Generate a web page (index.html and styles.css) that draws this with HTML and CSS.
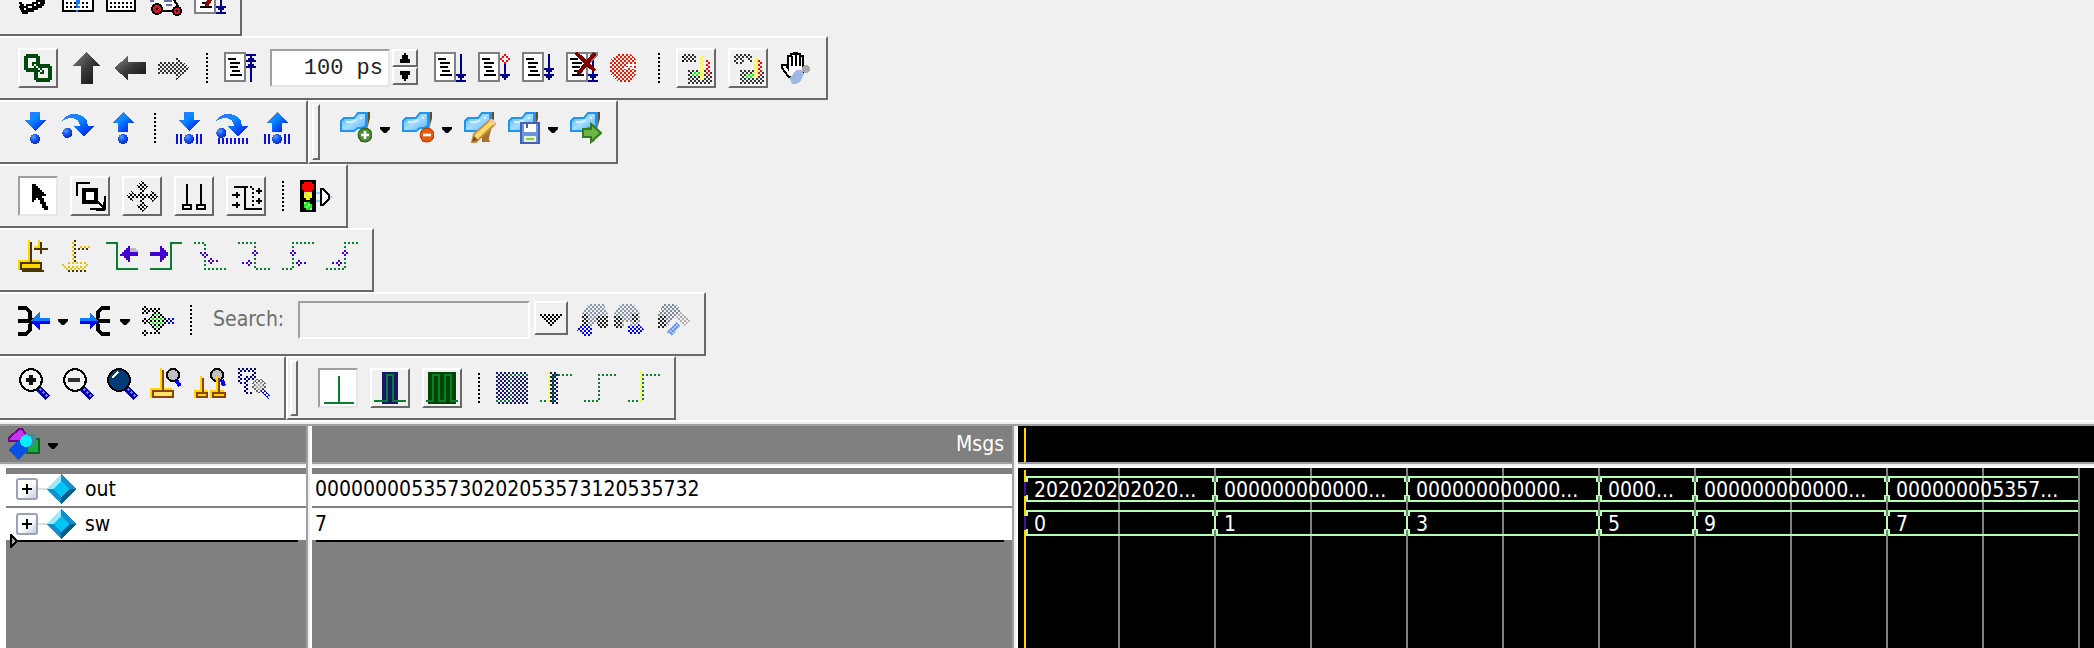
FILE: index.html
```html
<!DOCTYPE html>
<html lang="en">
<head>
<meta charset="utf-8">
<title>Wave</title>
<link rel="stylesheet" href="styles.css">
</head>
<body>
<svg class="defs" aria-hidden="true">
  <defs>
    <pattern id="chk" width="2" height="2" patternUnits="userSpaceOnUse"><path d="M0 0h1v1H0zM1 1h1v1H1z" fill="#fff"/></pattern>
    <pattern id="chk2" width="2" height="2" patternUnits="userSpaceOnUse"><path d="M1 0h1v1H1zM0 1h1v1H0z" fill="#fff"/></pattern>
    <mask id="dither" maskUnits="userSpaceOnUse" x="0" y="0" width="16" height="16"><rect width="16" height="16" fill="url(#chk)"/></mask>
    <mask id="dither2" maskUnits="userSpaceOnUse" x="0" y="0" width="16" height="16"><rect width="16" height="16" fill="url(#chk2)"/></mask>
    <linearGradient id="blue" x1="0" y1="0" x2="1" y2="1"><stop offset="0" stop-color="#3a6cff"/><stop offset=".4" stop-color="#0a8cff"/><stop offset="1" stop-color="#0008f0"/></linearGradient>
    <linearGradient id="dark" x1="0" y1="0" x2="1" y2="1"><stop offset="0" stop-color="#8a8a8a"/><stop offset=".5" stop-color="#3a3a3a"/><stop offset="1" stop-color="#111"/></linearGradient>
    <linearGradient id="sky" x1="0" y1="0" x2="1" y2="1"><stop offset="0" stop-color="#3fb0fa"/><stop offset=".5" stop-color="#a5dcff"/><stop offset="1" stop-color="#48b2fa"/></linearGradient>
    <radialGradient id="ball" cx=".35" cy=".3" r=".8"><stop offset="0" stop-color="#4fa0ff"/><stop offset=".5" stop-color="#1650f0"/><stop offset="1" stop-color="#0a1ec0"/></radialGradient>
  </defs>
  <symbol id="doc" viewBox="0 0 16 16"><path d="M.5.5h10v14H.5z" fill="#fff" stroke="#808080"/><path d="M2 3.500h4M3 5.500h5M3 7.500h4M4 9.500h4M3 11.500h6" stroke="#000"/></symbol>
  <symbol id="flag" viewBox="0 0 16 16"><path d="M13 0h2v3l-1 4-2 8h-2l2-7z" fill="#a8752f"/><path d="M14 0h1v3l-1 3z" fill="#6b4a1d"/><path d="M.5 4.500L2 3h5l2-2.500h4V7l-2 1H9L7 9.500H.5z" fill="url(#sky)" stroke="#1d94f2"/><path d="M3 5h3l2-1M10 3h1" stroke="#d5f0ff" fill="none"/></symbol>
  <symbol id="down" viewBox="0 0 16 16"><path d="M6 0h5v4h3L8.500 9.500 3 4h3z" fill="url(#blue)"/><circle cx="8.500" cy="13.500" r="2.500" fill="url(#ball)"/></symbol>
  <symbol id="over" viewBox="0 0 16 16"><path d="M0 4.500C1 2 4 1 6 1c4 0 7 2 7 6h3l-5 5.500L6 7h3C9 4.500 7 3 4.500 3 2.500 3 1 3.500 0 4.500z" fill="url(#blue)"/><circle cx="2.700" cy="10.500" r="2.500" fill="url(#ball)"/></symbol>
  <symbol id="up" viewBox="0 0 16 16"><path d="M8.500 0L14 5.500h-3V10H6V5.500H3z" fill="url(#blue)"/><circle cx="8.500" cy="13.500" r="2.500" fill="url(#ball)"/></symbol>
  <symbol id="lens" viewBox="0 0 16 16"><path d="M10 10l5 5" stroke="#0000b0" stroke-width="3"/><path d="M11 10.500l4 4" stroke="#8080ff" stroke-dasharray="1 1"/><circle cx="6.500" cy="6" r="5.400" fill="#f4f4f4" stroke="#000"/></symbol>
</svg>

<header class="toolbars">
  <div class="row row-top">
    <div class="bar plain" role="toolbar" aria-label="Layout">
      <button class="tool" aria-label="Layers"><svg viewBox="0 0 16 16"><path d="M1 8l3 7 5-1 6-6V5H5z" fill="#fff"/><path d="M1 10h1v1h1v1h2v-1h3v-1h2V9h2V8h2M1 12h1v1h1v1h2v-1h3v-1h2v-1h2v-1h1V9h1M2 14h1v1h2v-1h3v-1h2v-1h2v-1h1v-1h1" transform="translate(-.5 -.5)" fill="none" stroke="#000" stroke-width=".8"/></svg></button>
      <button class="tool" aria-label="Columns"><svg viewBox="0 0 16 16"><path d="M.5 2.500h15v11H.5z" fill="#fff" stroke="#000"/><path d="M2 9.500h12M2 11.500h12" stroke="#000" stroke-dasharray="1 1"/><path d="M7 2h1v9h1v1H7zM8 8h1v2H8zM7 13h1v1H7z" fill="#0a7cff"/></svg></button>
      <button class="tool" aria-label="Grid"><svg viewBox="0 0 16 16"><path d="M.5 2.500h14v11H.5z" fill="#fff" stroke="#000"/><path d="M2 9.500h12M2 11.500h12" stroke="#000" stroke-dasharray="1 1"/></svg></button>
      <button class="tool" aria-label="Compile"><svg viewBox="0 0 16 16"><path d="M2 4h10v7H2z" fill="#fff"/><path d="M0 8.500h2M7 8.500h4M8 10.500h3" stroke="#6a6aa8"/><path d="M6 13.500h6M12 8l2 3" stroke="#000"/><circle cx="3.500" cy="12.500" r="2.500" fill="#d4142c" stroke="#000"/><circle cx="13.500" cy="13.500" r="2" fill="#d4142c" stroke="#000"/><path d="M3 12.500h1M13 13.500h1" stroke="#000"/></svg></button>
      <button class="tool" aria-label="Simulate"><svg viewBox="0 0 16 16"><use href="#doc"/><path d="M8.500 7L6 11" stroke="#900" stroke-width="2"/><path d="M13.500 4v10M11 14.500h5M11 11.500h5M12 12.500h3" stroke="#00008b"/></svg></button>
    </div>
  </div>

  <div class="row">
    <div class="bar" role="toolbar" aria-label="Simulate">
      <button class="tool raised" aria-label="Link"><svg viewBox="0 0 16 16"><path d="M2 1h6v1h1v7H8v1H2V9H1V2h1z" fill="#004a10"/><path d="M3 3h4v5H3z" fill="#f0f0f0"/><path d="M7 6h7v1h1v7h-1v1H7v-1H6V7h1z" fill="#004a10"/><path d="M8 8h5v5H8z" fill="#f0f0f0"/><path d="M5 5h2v1h1v1h2v2h1v2H9v-1H8V9H6V7H5z" fill="#004a10"/><path d="M6 6h1v1H6zM7 7h1v1H7zM8 8h1v1H8zM9 9h1v1H9z" fill="#f0f0f0"/></svg></button>
      <button class="tool" aria-label="Up"><svg viewBox="0 0 16 16"><path d="M8 0l7 7h-3.500v9h-6V7H1z" fill="url(#dark)"/></svg></button>
      <button class="tool" aria-label="Back"><svg viewBox="0 0 16 16"><path d="M0 8l7-6v3h9v6H7v3z" fill="url(#dark)"/></svg></button>
      <button class="tool" aria-label="Forward" disabled><svg viewBox="0 0 16 16"><path d="M16 8L9 2v3H0v6h9v3z" fill="#333" mask="url(#dither)"/></svg></button>
      <span class="sep"></span>
      <button class="tool" aria-label="Restart"><svg viewBox="0 0 16 16"><use href="#doc"/><path d="M11 1.500h5M13.500 1v14M12 3.500h3M11 4.500h5M12 6.500h3M11 7.500h5" stroke="#00008b"/></svg></button>
      <span class="spin">
        <input class="entry" type="text" value="100 ps" aria-label="Run length">
        <span class="steps">
          <button class="step" aria-label="Increase"><svg viewBox="0 0 5 5"><path d="M2 0h1v1h1v2h1v2H0V3h1V1h1z"/></svg></button>
          <button class="step" aria-label="Decrease"><svg viewBox="0 0 5 5"><path d="M2 5h1V4h1V2h1V0H0v2h1v2h1z"/></svg></button>
        </span>
      </span>
      <button class="tool" aria-label="Run"><svg viewBox="0 0 16 16"><use href="#doc"/><path d="M13.500 1v14M11 11.500h5M12 12.500h3M11 14.500h5" stroke="#00008b"/></svg></button>
      <button class="tool" aria-label="Continue run"><svg viewBox="0 0 16 16"><use href="#doc"/><path d="M13.500 5v9M11 11.500h5M12 12.500h3" stroke="#00008b"/><path d="M13 1h1v1h1v1h1v1h-1v1h-1v1h-1V5h-1V4h-1V3h1V2h1z" fill="red"/><path d="M13 2h1v1h1v1h-1v1h-1V4h-1V3h1z" fill="#fff"/></svg></button>
      <button class="tool" aria-label="Run all"><svg viewBox="0 0 16 16"><use href="#doc"/><path d="M13.500 1v13M11 8.500h5M12 9.500h3M11 11.500h5M12 12.500h3" stroke="#00008b"/></svg></button>
      <button class="tool" aria-label="Break"><svg viewBox="0 0 16 16"><use href="#doc"/><path d="M13.500 4v11M11 11.500h5M12 12.500h3M11 14.500h5" stroke="#00008b"/><path d="M11 .5h4.500V2M15 2l-4 4" stroke="#888" fill="none"/><path d="M5 .5l9.500 9M14.500.5L6 11" stroke="#800000" stroke-width="2"/></svg></button>
      <button class="tool" aria-label="Stop" disabled><svg viewBox="0 0 16 16"><g mask="url(#dither2)"><path d="M4 1h6l3 3v7l-3 4H4l-4-4V4z" fill="#e81c00"/></g><path d="M8 6.500h4M7 8h2M10 8h2" stroke="#fff"/></svg></button>
      <span class="sep"></span>
      <button class="tool raised" aria-label="Performance profiling" disabled><svg viewBox="0 0 16 16"><g mask="url(#dither2)"><path d="M2 1h6v4H2zM4 9h12v7H4z" fill="#333"/><path d="M1 2h1v3H1z"/><path d="M10 2h2v12h-2z" fill="#ff0"/><path d="M13 4h2v8h-2z" fill="red"/><path d="M6 10h4v2H6z" fill="#0f0"/></g></svg></button>
      <button class="tool raised" aria-label="Memory profiling" disabled><svg viewBox="0 0 16 16"><g mask="url(#dither2)"><path d="M1 6V1h9v4H8V3H6v3H4V3H3v3zM4 9h12v7H4z" fill="#333"/><path d="M11 3h2v10h-2z" fill="#ff0"/><path d="M13 4h2v8h-2z" fill="red"/><path d="M7 11h4v2H7z" fill="#0f0"/></g></svg></button>
      <button class="tool" aria-label="Pan"><svg viewBox="0 0 16 16"><path d="M4 12L1 8V6.500h2L4 8V2h1.500V1H7V.5h1.500V1H10v1h1.500v6l1 .5-2 4.500-2 2z" fill="#fff" stroke="#000"/><path d="M6 2v5M8 1v6M10 2v5" stroke="#000"/><path d="M8 9h3l1 2-2 4-2 1H6l-1-3z" fill="#9db7e6"/><circle cx="13" cy="8.500" r="2" fill="#aaa"/></svg></button>
    </div>
  </div>

  <div class="row">
    <div class="bar plain" role="toolbar" aria-label="Step">
      <button class="tool" aria-label="Step into"><svg viewBox="0 0 16 16"><use href="#down"/></svg></button>
      <button class="tool" aria-label="Step over"><svg viewBox="0 0 16 16"><use href="#over"/></svg></button>
      <button class="tool" aria-label="Step out"><svg viewBox="0 0 16 16"><use href="#up"/></svg></button>
      <span class="sep"></span>
      <button class="tool" aria-label="Step into current"><svg viewBox="0 0 16 16"><use href="#down"/><path d="M2.500 11v5M4.500 11v5M12.500 11v5M14.500 11v5" stroke="#1010e0"/></svg></button>
      <button class="tool" aria-label="Step over current"><svg viewBox="0 0 16 16"><use href="#over"/><path d="M1 14.500h15" stroke="#1010e0" stroke-width="3" stroke-dasharray="1 1"/></svg></button>
      <button class="tool" aria-label="Step out current"><svg viewBox="0 0 16 16"><use href="#up"/><path d="M2.500 11v5M4.500 11v5M12.500 11v5M14.500 11v5" stroke="#1010e0"/></svg></button>
    </div>
    <div class="bar plain gripped" role="toolbar" aria-label="Bookmarks">
      <span class="grip"></span>
      <button class="tool" aria-label="Add bookmark"><svg class="smooth" viewBox="0 0 16 16"><use href="#flag"/><circle cx="12.500" cy="11.500" r="3.400" fill="#4c8f31" stroke="#2e5d1f" stroke-width=".6"/><path d="M10.500 11.500h4M12.500 9.500v4" stroke="#fff" stroke-width="1.300"/></svg></button>
      <button class="drop" aria-label="Add bookmark menu"></button>
      <button class="tool" aria-label="Delete bookmark"><svg class="smooth" viewBox="0 0 16 16"><use href="#flag"/><circle cx="12.500" cy="11.500" r="3.400" fill="#e85c12" stroke="#b43e08" stroke-width=".6"/><path d="M10.500 11.500h4" stroke="#fff" stroke-width="1.300"/></svg></button>
      <button class="drop" aria-label="Delete bookmark menu"></button>
      <button class="tool" aria-label="Edit bookmarks"><svg class="smooth" viewBox="0 0 16 16"><use href="#flag"/><path d="M9 12l2-2 2 5H9z" fill="#a8702c"/><path d="M4 15l1-4 8-7 2.500 2L9 12l-3 3z" fill="#f6dc6a" stroke="#c98f45"/><path d="M13 4l2.500 2" stroke="#f4c9a0" stroke-width="2"/><path d="M4 15l1-3 2 2z" fill="#7c4a1e"/></svg></button>
      <button class="tool" aria-label="Save bookmarks"><svg class="smooth" viewBox="0 0 16 16"><use href="#flag"/><path d="M6.500 5.500h9v10h-9z" fill="#6d93dc" stroke="#3f62b5"/><path d="M8 6h6v4H8z" fill="#fff"/><path d="M9 6h1v2H9z" fill="#3f62b5"/><path d="M8 12h6v3H8z" fill="#e8f0d8"/><path d="M9 13.500h4" stroke="#8ccf3c"/></svg></button>
      <button class="drop" aria-label="Save bookmarks menu"></button>
      <button class="tool" aria-label="Go to bookmark"><svg class="smooth" viewBox="0 0 16 16"><use href="#flag"/><path d="M6.500 8.500h4V6l5 4.500-5 4.500v-2.500h-4z" fill="#6fb446" stroke="#2f7d1d"/></svg></button>
    </div>
  </div>

  <div class="row">
    <div class="bar" role="toolbar" aria-label="Mode">
      <button class="tool sunken" aria-label="Select mode"><svg viewBox="0 0 16 16"><path d="M5 3v8h1v-1h1V9h1v1h1v2h1v2h1v1h2v-2h-1v-2h-1V9h-1V8h2V7h-1V6h-1V5H9V4H8V3H7V2H5z"/></svg></button>
      <button class="tool raised" aria-label="Zoom mode"><svg viewBox="0 0 16 16"><path d="M1.500 8V1.500H8M15.500 8v6.500H8" fill="none" stroke="#000"/><path d="M5 5h6v6H5z" fill="#fff" stroke="#000" stroke-width="2"/><path d="M11 10l4 4M15 11v4h-4" stroke="#000" fill="none"/></svg></button>
      <button class="tool raised" aria-label="Pan mode" disabled><svg viewBox="0 0 16 16"><path d="M8 0l3 3-2 2v2h3l1-2 3 3-3 3-1-2H9v3l2 1-3 3-3-3 2-1V9H4l-1 2-3-3 3-3 1 2h3V5L5 3z" mask="url(#dither2)"/></svg></button>
      <button class="tool raised" aria-label="Two cursor mode"><svg viewBox="0 0 16 16"><path d="M4.500 2v10M11.500 2v10M2.500 12.500h4v2h-4zM9.500 12.500h4v2h-4z" fill="none" stroke="#000"/></svg></button>
      <button class="tool raised" aria-label="Edit mode"><svg viewBox="0 0 16 16"><path d="M2 3.500h5.500v11H16M1 7.500h4M3.500 6v3M1 12.500h4M3.500 11v3M13 5.500h3M14.500 4v3M13 10.500h3M14.500 9v3" fill="none" stroke="#000"/><path d="M8 3.500h4M11.500 4v11" stroke="#000" stroke-dasharray="1 1"/></svg></button>
      <span class="sep"></span>
      <button class="tool" aria-label="Stop drawing"><svg viewBox="0 0 16 16"><path d="M0 0h8v16H0z"/><path d="M2 1h4v1h1v3H6v1H2V5H1V2h1z" fill="red"/><path d="M3 6h2v1h1v2H5v1H3V9H2V7h1z" fill="#ff0"/><path d="M3 11h2v1h1v2H5v1H3v-1H2v-2h1z" fill="#0f0"/><path d="M3 7h1v1H3zM4 8h1v1H4zM2 6h1v1H2zM5 6h1v1H5zM3 13h1v1H3zM4 12h1v1H4zM2 11h1v1H2zM5 14h1v1H5z" fill="#ccc"/><path d="M8 6.500h2M8 10.500h2M15 8.500h1" stroke="#8bd0f5"/><path d="M10.500 4.500h1l3 3v2l-3 3h-1z" fill="#fff" stroke="#000"/></svg></button>
    </div>
  </div>

  <div class="row">
    <div class="bar plain" role="toolbar" aria-label="Cursors">
      <button class="tool" aria-label="Insert cursor"><svg viewBox="0 0 16 16"><path d="M5.500 0v11M10.500 0v4M8 3.500h3M.5 15v-4.500H11" stroke="#ffd700" fill="none"/><path d="M6.500 1v10M11.500 1v6M8 4.500h7M2 15.500h11" stroke="#4a3500"/><path d="M1.500 11.500h10v3h-10z" fill="#ffd700" stroke="#4a3500"/></svg></button>
      <button class="tool" aria-label="Delete cursor" disabled><svg viewBox="0 0 16 16"><g mask="url(#dither)"><path d="M5 0h1v11H5zM8 3h6v1H8zM2 11h10v1H2zM0 12h2v2H0zM11 12h2v2h-2zM2 13h10v2H2z" fill="#e8c400"/><path d="M6 0h1v11H6zM8 4h6v1H8zM2 15h11v1H2z" fill="#4a3500"/></g></svg></button>
      <button class="tool" aria-label="Previous transition"><svg viewBox="0 0 16 16"><path d="M0 1.500h5.500v13H16" fill="none" stroke="#087f2e"/><path d="M12 4h3v1h1v1h-4z" fill="#bbb"/><path d="M7 7h1V6h1V5h1V4h1V3h1v3h4v2h-4v3h-1v-1h-1V9H9V8H7z" fill="#4000d0"/></svg></button>
      <button class="tool" aria-label="Next transition"><svg viewBox="0 0 16 16"><path d="M16 1.500h-5.500v13H0" fill="none" stroke="#087f2e"/><path d="M9 7V6H8V5H7V4H6V3H5v3H0v2h5v3h1v-1h1V9h1V8h1z" fill="#4000d0"/></svg></button>
      <button class="tool" aria-label="Previous falling edge" disabled><svg viewBox="0 0 16 16"><path d="M0 1.500h5.500v13H16" fill="none" stroke="#087f2e" stroke-dasharray="1 1"/><path d="M3 6h1v1H3zM5 6h1v1H5zM4 7h1v1H4zM6 7h1v1H6zM5 8h1v1H5zM8 9h1v1H8zM7 10h1v1H7zM9 10h1v1H9zM11 10h1v1h-1zM8 11h1v1H8z" fill="#4000d0"/></svg></button>
      <button class="tool" aria-label="Next falling edge" disabled><svg viewBox="0 0 16 16"><path d="M0 1.500h8.500v13H16" fill="none" stroke="#087f2e" stroke-dasharray="1 1"/><path d="M8 5h1v1H8zM7 6h1v1H7zM9 6h1v1H9zM8 7h1v1H8zM5 10h1v1H5zM4 11h1v1H4zM6 11h1v1H6zM5 12h1v1H5zM2 11h1v1H2z" fill="#4000d0"/></svg></button>
      <button class="tool" aria-label="Previous rising edge" disabled><svg viewBox="0 0 16 16"><path d="M0 14.500h5.500v-13H16" fill="none" stroke="#087f2e" stroke-dasharray="1 1"/><path d="M5 5h1v1H5zM4 6h1v1H4zM6 6h1v1H6zM5 7h1v1H5zM8 10h1v1H8zM7 11h1v1H7zM9 11h1v1H9zM8 12h1v1H8zM11 11h1v1h-1z" fill="#4000d0"/></svg></button>
      <button class="tool" aria-label="Next rising edge" disabled><svg viewBox="0 0 16 16"><path d="M0 14.500h9.500v-13H16" fill="none" stroke="#087f2e" stroke-dasharray="1 1"/><path d="M9 5h1v1H9zM8 6h1v1H8zM10 6h1v1h-1zM9 7h1v1H9zM6 10h1v1H6zM5 11h1v1H5zM7 11h1v1H7zM6 12h1v1H6zM3 11h1v1H3z" fill="#4000d0"/></svg></button>
    </div>
  </div>

  <div class="row">
    <div class="bar plain" role="toolbar" aria-label="Search">
      <button class="tool" aria-label="Collapse"><svg viewBox="0 0 16 16"><path d="M0 2h4l2 2v2.500l1 2-1 2V13l-2 2H0M0 8.500h6" fill="none" stroke="#000" stroke-width="2"/><path d="M6 8.500L11 4v3h5v1.500z" fill="#0a7cff"/><path d="M6 8.500h10V10h-5v3z" fill="#00f"/></svg></button>
      <button class="drop" aria-label="Collapse menu"></button>
      <button class="tool" aria-label="Expand"><svg viewBox="0 0 16 16"><path d="M15 2h-4L9 4v2.500l-1 2 1 2V13l2 2h4M9 8.500h6" fill="none" stroke="#000" stroke-width="2"/><path d="M9 8.500L5 4v3H0v1.500z" fill="#0a7cff"/><path d="M9 8.500H0V10h5v3z" fill="#00f"/></svg></button>
      <button class="drop" aria-label="Expand menu"></button>
      <button class="tool" aria-label="Expand time" disabled><svg viewBox="0 0 16 16"><g mask="url(#dither)"><path d="M0 1h3v1h6v2H3v1H0zM0 7h3v3H0zM3 8l4-5h1l5 5v1l-5 5H7L3 9zM0 13h3v1h6v1H3v1H0z"/><path d="M13 7h3v3h-3z" fill="#00f"/></g><path d="M7 5h1v1H7zM5 7h1v1H5zM7 7h1v1H7zM9 7h1v1H9zM5 9h1v1H5zM7 9h1v1H7zM9 9h1v1H9zM7 11h1v1H7z" fill="#0f0"/></svg></button>
      <span class="sep"></span>
      <label class="search-label" for="search">Search:</label>
      <span class="combo">
        <input class="entry search-entry" id="search" type="text" disabled>
        <button class="combo-button" aria-label="Search history" disabled><svg viewBox="0 0 11 6"><path d="M0 0h1v1H0zM2 0h1v1H2zM4 0h1v1H4zM6 0h1v1H6zM8 0h1v1H8zM10 0h1v1h-1zM1 1h1v1H1zM3 1h1v1H3zM5 1h1v1H5zM7 1h1v1H7zM9 1h1v1H9zM2 2h1v1H2zM4 2h1v1H4zM6 2h1v1H6zM8 2h1v1H8zM3 3h1v1H3zM5 3h1v1H5zM7 3h1v1H7zM4 4h1v1H4zM6 4h1v1H6zM5 5h1v1H5z"/></svg></button>
      </span>
      <span class="finders">
        <button class="tool" aria-label="Search reverse" disabled><svg viewBox="0 0 16 16"><g mask="url(#dither2)"><path d="M6 0h8l2 5v7h-5v-3H9v2H3V5z" fill="#8a97a6"/><path d="M3 5h3v6H3zM10 6h6v6h-5z" fill="#222"/><path d="M0 13l3-3v1h5v5H3v-1z" fill="#00f"/></g></svg></button>
        <button class="tool" aria-label="Search forward" disabled><svg viewBox="0 0 16 16"><g mask="url(#dither2)"><path d="M4 0h7l3 5v6H9V9H6v3H1V5z" fill="#8a97a6"/><path d="M1 6h4v6H1zM10 5h3v4h-3z" fill="#222"/><path d="M16 13l-3-3v1H8v4h5v1z" fill="#00f"/></g></svg></button>
        <button class="tool wide-gap" aria-label="Search options" disabled><svg viewBox="0 0 16 16"><g mask="url(#dither2)"><path d="M3 0h6l3 4-5 4-3 4H0V5z" fill="#7c8898"/><path d="M0 6h4v6H0z" fill="#222"/><path d="M11 4l5 4-3 3-4-4z" fill="#aaa"/></g><path d="M9 9l2 2-4 5-3-2z" fill="#a9c2ee"/><path d="M9 9l2 2-4 5-3-2z" fill="#6d96e6" mask="url(#dither)"/></svg></button>
      </span>
    </div>
  </div>

  <div class="row">
    <div class="bar plain" role="toolbar" aria-label="Zoom">
      <button class="tool" aria-label="Zoom in"><svg viewBox="0 0 16 16"><use href="#lens"/><path d="M4 6h5M6.500 3.500v5" stroke="#111" stroke-width="2"/></svg></button>
      <button class="tool" aria-label="Zoom out"><svg viewBox="0 0 16 16"><use href="#lens"/><path d="M3 6h6" stroke="#333" stroke-width="2"/></svg></button>
      <button class="tool" aria-label="Zoom full"><svg viewBox="0 0 16 16"><use href="#lens"/><circle cx="6.500" cy="6" r="5" fill="#003c78"/><path d="M3 5l3-3" stroke="#fff"/></svg></button>
      <button class="tool" aria-label="Zoom cursor"><svg viewBox="0 0 16 16"><path d="M5.500 0v11M.5 15v-4.500H11" stroke="#ffd700" fill="none"/><path d="M6.500 1v10" stroke="#8b4500"/><path d="M1.500 11.500h10v3h-10z" fill="#ffe36b" stroke="#8b4500"/><circle cx="11.500" cy="3.500" r="3" fill="#c0c0c0" stroke="#000"/><path d="M13 6l2 3" stroke="#00f" stroke-width="2"/></svg></button>
      <button class="tool" aria-label="Zoom between cursors"><svg viewBox="0 0 16 16"><circle cx="11.500" cy="3.500" r="3" fill="#c0c0c0" stroke="#000"/><path d="M14 6l1 3" stroke="#00f" stroke-width="2"/><path d="M3.500 4v8M11.500 4v8M.5 15v-3.500H7M8.500 15v-3.500H15" stroke="#ffd700" fill="none"/><path d="M4.500 5v7M12.500 5v7" stroke="#8b4500"/><path d="M1.500 12.500h5v2h-5zM9.500 12.500h6v2h-6z" fill="#ffd700" stroke="#8b4500"/></svg></button>
      <button class="tool" aria-label="Zoom other window" disabled><svg viewBox="0 0 16 16"><g mask="url(#dither)"><path d="M0 0h9v4H7V2H2v6H0z" fill="#000080"/><path d="M3 4h6v2H5v6h3v1H3z" fill="#000080"/><circle cx="10.500" cy="9" r="3.500" fill="#666"/><path d="M12 11l4 4" stroke="#00f" stroke-width="2"/></g><circle cx="10.500" cy="9" r="2" fill="#ddd" opacity=".6"/></svg></button>
    </div>
    <div class="bar gripped" role="toolbar" aria-label="Expanded time">
      <span class="grip"></span>
      <button class="tool sunken" aria-label="Expanded time off"><svg viewBox="0 0 16 16"><path d="M8.500 2v13M1 15.500h15" stroke="#087f2e"/></svg></button>
      <button class="tool raised" aria-label="Expanded time deltas"><svg viewBox="0 0 16 16"><path d="M4 0h8v16H4z" fill="#17176c"/><path d="M0 14.500h6.500v-13h3v13H16" fill="none" stroke="#087f2e"/></svg></button>
      <button class="tool raised" aria-label="Expanded time events"><svg viewBox="0 0 16 16"><path d="M1 0h14v16H1z" fill="#004500"/><path d="M0 14.500h3.500v-13h3v13h3v-13h3v13H16" fill="none" stroke="#087f2e"/></svg></button>
      <span class="sep"></span>
      <button class="tool" aria-label="Expand all time" disabled><svg viewBox="0 0 16 16"><path d="M0 0h16v16H0z" fill="#17176c" mask="url(#dither)"/><path d="M0 14.500h7.500v-13H16" fill="none" stroke="#087f2e" stroke-dasharray="1 1"/></svg></button>
      <button class="tool" aria-label="Expand time at cursor" disabled><svg viewBox="0 0 16 16"><path d="M5 0h4v16H5z" fill="#17176c" mask="url(#dither2)"/><path d="M0 14.500h6.500v-13H16" fill="none" stroke="#087f2e" stroke-dasharray="1 1"/><path d="M4.500 0v16" stroke="#ff0" stroke-dasharray="1 1"/></svg></button>
      <button class="tool" aria-label="Collapse all time" disabled><svg viewBox="0 0 16 16"><path d="M0 14.500h7.500v-13H16" fill="none" stroke="#087f2e" stroke-dasharray="1 1"/></svg></button>
      <button class="tool" aria-label="Collapse time at cursor" disabled><svg viewBox="0 0 16 16"><path d="M0 14.500h7.500v-13H16" fill="none" stroke="#087f2e" stroke-dasharray="1 1"/><path d="M6.500 0v16" stroke="#ff0" stroke-dasharray="1 1"/></svg></button>
    </div>
  </div>
</header>

<main class="panel">
  <section class="pane names">
    <div class="head">
      <button class="tool" aria-label="Objects"><svg viewBox="0 0 16 16"><path d="M.5 6.500V5l5-4.500H7L9.500 4 8 6.500z" fill="#c832f0" stroke="#6a0a85"/><path d="M9.500 5.500h6v7h-6z" fill="#1aad3c" stroke="#0f6428"/><circle cx="10.500" cy="6" r="3.500" fill="#4889a0"/><path d="M5 6l5 5-5 5-5-5z" fill="#0a50e6"/><circle cx="9" cy="6.500" r="3" fill="#00f0ff"/></svg></button>
      <button class="drop" aria-label="Objects menu"></button>
    </div>
    <div class="body">
      <div class="signal"><button class="plus" aria-label="Expand out"></button><svg class="gem" viewBox="0 0 15 15"><path d="M7.500 0v4L4 7.500H0z" fill="#a0e8fc"/><path d="M7.500 0L15 7.500h-4L7.500 4zM0 7.500h4L7.500 11v4z" fill="#1090d0"/><path d="M15 7.500L7.500 15v-4L11 7.500z" fill="#005f8a"/><path d="M7.500 3.500l4 4-4 4-4-4z" fill="#00c4f4"/></svg><span class="text">out</span></div>
      <div class="signal"><button class="plus" aria-label="Expand sw"></button><svg class="gem" viewBox="0 0 15 15"><path d="M7.500 0v4L4 7.500H0z" fill="#a0e8fc"/><path d="M7.500 0L15 7.500h-4L7.500 4zM0 7.500h4L7.500 11v4z" fill="#1090d0"/><path d="M15 7.500L7.500 15v-4L11 7.500z" fill="#005f8a"/><path d="M7.500 3.500l4 4-4 4-4-4z" fill="#00c4f4"/></svg><span class="text">sw</span></div>
      <div class="end-line"><svg class="marker" viewBox="0 0 4 7"><path d="M.5.5v6l3-3z" fill="#aaa" stroke="#000"/></svg></div>
    </div>
  </section>
  <div class="sash"></div>
  <section class="pane values">
    <div class="head"><span class="text">Msgs</span></div>
    <div class="body">
      <div class="signal"><span class="text">00000000535730202053573120535732</span></div>
      <div class="signal"><span class="text">7</span></div>
      <div class="end-line"></div>
    </div>
  </section>
  <div class="sash"></div>
  <section class="pane waves">
    <div class="head"><span class="cursor"></span></div>
    <div class="body">
      <div class="wave">
        <div class="seg" style="width:188px">202020202020...</div>
        <div class="seg" style="width:190px">000000000000...</div>
        <div class="seg" style="width:190px">000000000000...</div>
        <div class="seg" style="width:94px">0000...</div>
        <div class="seg" style="width:190px">000000000000...</div>
        <div class="seg" style="width:190px">000000005357...</div>
      </div>
      <div class="wave">
        <div class="seg" style="width:188px">0</div>
        <div class="seg" style="width:190px">1</div>
        <div class="seg" style="width:190px">3</div>
        <div class="seg" style="width:94px">5</div>
        <div class="seg" style="width:190px">9</div>
        <div class="seg" style="width:190px">7</div>
      </div>
    </div>
  </section>
</main>
</body>
</html>
```
FILE: styles.css
```css
* { box-sizing: border-box; }

html, body { height: 100%; }

body {
  margin: 0;
  display: flex;
  flex-direction: column;
  overflow: hidden;
  background: #f0f0f0;
  color: #000;
  font: 21px/32px "DejaVu Sans Condensed", "DejaVu Sans", sans-serif;
}

button { margin: 0; padding: 0; border: 0; background: none; }

svg { display: block; shape-rendering: crispEdges; }
svg.smooth { shape-rendering: auto; }
.defs { position: absolute; width: 0; height: 0; }

/* toolbars */
.toolbars { flex: none; }
.row { display: flex; height: 64px; }
.row-top { height: 36px; overflow: hidden; align-items: flex-end; }
.bar {
  display: flex;
  align-items: center;
  gap: 12px;
  height: 64px;
  flex: none;
  padding: 0 14px 0 18px;
  border: 2px solid #696969;
  border-top-color: #fff;
  border-left: 0;
}
.plain { padding-bottom: 8px; }
.gripped {
  position: relative;
  padding-left: 30px;
  border-left: 2px solid #fff;
}
.grip {
  position: absolute;
  top: 2px;
  bottom: 2px;
  left: 2px;
  width: 8px;
  border: 2px solid #696969;
  border-top-color: #fff;
  border-left-color: #fff;
}
.tool { flex: none; width: 32px; height: 32px; }
.tool svg { width: 32px; height: 32px; }
.raised, .sunken {
  width: 40px;
  height: 40px;
  padding: 2px;
  border: 2px solid #696969;
  border-top-color: #fff;
  border-left-color: #fff;
}
.sunken {
  background: #fff;
  border-color: #a0a0a0 #e6e6e6 #e6e6e6 #a0a0a0;
}
.sep {
  width: 2px;
  height: 30px;
  margin: 0 4px;
  background: repeating-linear-gradient(#000 0 2px, transparent 2px 4px);
}
.drop {
  flex: none;
  width: 18px;
  height: 32px;
  margin-left: -12px;
  padding: 4px 0 0 8px;
}
.drop::before {
  content: "";
  display: block;
  width: 10px;
  height: 6px;
  background: #000;
  clip-path: polygon(0 0, 100% 0, 100% 34%, 60% 100%, 40% 100%, 0 34%);
}

.entry {
  width: 120px;
  height: 38px;
  margin: 0;
  padding: 0 5px 0 2px;
  border: 2px solid;
  border-color: #a0a0a0 #e6e6e6 #e6e6e6 #a0a0a0;
  border-radius: 0;
  background: #fff;
  color: #222;
  font: 22px/32px "Liberation Mono", monospace;
  text-align: right;
}
.spin { display: flex; gap: 2px; margin: 0 4px 0 2px; }
.steps { display: flex; flex-direction: column; width: 26px; height: 36px; }
.step {
  display: flex;
  align-items: center;
  justify-content: center;
  height: 18px;
  border: 2px solid #696969;
  border-top-color: #fff;
  border-left-color: #fff;
}
.step svg { width: 12px; height: 10px; }

.search-label { margin: 0 2px 2px 5px; color: #6d6d6d; }
.combo { display: flex; gap: 4px; }
.search-entry {
  width: 232px;
  background: #f0f0f0;
  border-color: #a0a0a0 #fff #fff #a0a0a0;
}
.combo-button {
  display: flex;
  align-items: center;
  justify-content: center;
  width: 34px;
  height: 34px;
  padding-top: 4px;
  border: 2px solid #696969;
  border-top-color: #fff;
  border-left-color: #fff;
}
.combo-button svg { width: 22px; height: 12px; }
.finders { display: flex; gap: 4px; margin-left: -4px; }
.wide-gap { margin-left: 10px; }

/* wave panel */
.panel {
  flex: 1;
  display: grid;
  grid-template-columns: 306px 6px 700px 6px 1fr;
  min-height: 0;
  border-top: 2px solid #a0a0a0;
  box-shadow: 0 -2px #f0f0f0, 0 -4px #fff;
  margin-top: 4px;
}
.pane { display: flex; flex-direction: column; min-width: 0; background: #808080; }
.sash {
  background: linear-gradient(90deg, #a0a0a0 0 2px, #f0f0f0 2px 4px, #fff 4px 6px);
}
.head {
  display: flex;
  align-items: center;
  height: 42px;
  flex: none;
  border-bottom: 2px solid #fff;
  background: linear-gradient(#a0a0a0 0 2px, #f0f0f0 2px 4px) 0 100% / 100% 4px no-repeat;
  padding: 0 8px 4px;
}
.names .head .drop { margin-left: 0; }
.values .head { justify-content: flex-end; color: #fff; }
.body { flex: 1; padding-top: 6px; }
.names .body { border-left: 6px solid #fff; }
.signal {
  display: flex;
  align-items: center;
  height: 34px;
  padding-bottom: 2px;
  background: #fff;
  border-bottom: 2px solid #808080;
}
.signal:nth-child(2) { height: 32px; padding-bottom: 0; border-bottom: 0; }
.names .signal { padding-left: 10px; }
.values .signal { padding-left: 3px; }
.plus {
  width: 22px;
  height: 22px;
  border: 2px solid #9aa3b5;
  border-radius: 3px;
  background:
    linear-gradient(#000, #000) 50% 50% / 10px 2px no-repeat,
    linear-gradient(#000, #000) 50% 50% / 2px 10px no-repeat,
    linear-gradient(135deg, #fff 50%, #c3cbe0);
}
.gem {
  width: 38px;
  height: 30px;
  padding-left: 8px;
  background: linear-gradient(#ddd, #ddd) 0 50% / 10px 2px no-repeat;
}
.names .text { margin-left: 9px; }
.end-line {
  position: relative;
  height: 2px;
  margin: 0 8px 0 4px;
  background: #000;
}
.marker { position: absolute; left: 0; top: -6px; width: 8px; height: 14px; }

.waves .head { background-color: #000; padding: 2px 6px 4px; }
.cursor { width: 2px; height: 100%; background: #ffd700; }
.waves .body {
  padding: 8px 0 0 6px;
  background:
    linear-gradient(#ffd700, #ffd700) 6px 2px / 2px 100% no-repeat,
    linear-gradient(#000, #000) 0 0 / 10px 100% no-repeat,
    repeating-linear-gradient(90deg, #000 0 94px, #808080 94px 96px) 6px 0;
  background-color: #000;
}
.wave {
  display: flex;
  gap: 2px;
  height: 26px;
  margin-bottom: 8px;
  padding-left: 2px;
  color: #fff;
}
.seg {
  position: relative;
  flex: none;
  padding-left: 8px;
  line-height: 24px;
  white-space: nowrap;
  border: solid #b4ffb4;
  border-width: 2px 0;
  background:
    linear-gradient(#b4ffb4, #b4ffb4) 0 0 / 2px 4px no-repeat,
    linear-gradient(#b4ffb4, #b4ffb4) 0 100% / 2px 5px no-repeat,
    linear-gradient(#b4ffb4, #b4ffb4) 100% 0 / 2px 4px no-repeat,
    linear-gradient(#b4ffb4, #b4ffb4) 100% 100% / 2px 5px no-repeat;
}
.seg:last-child { background-size: 2px 4px, 2px 5px, 0 0, 0 0; }
/* transition bar in the gap ahead of each segment */
.seg::before {
  content: "";
  position: absolute;
  left: -2px;
  top: 4px;
  width: 2px;
  height: 14px;
  background: #b4ffb4;
}
.seg:first-child::before { background: #3c14a0; }
```
